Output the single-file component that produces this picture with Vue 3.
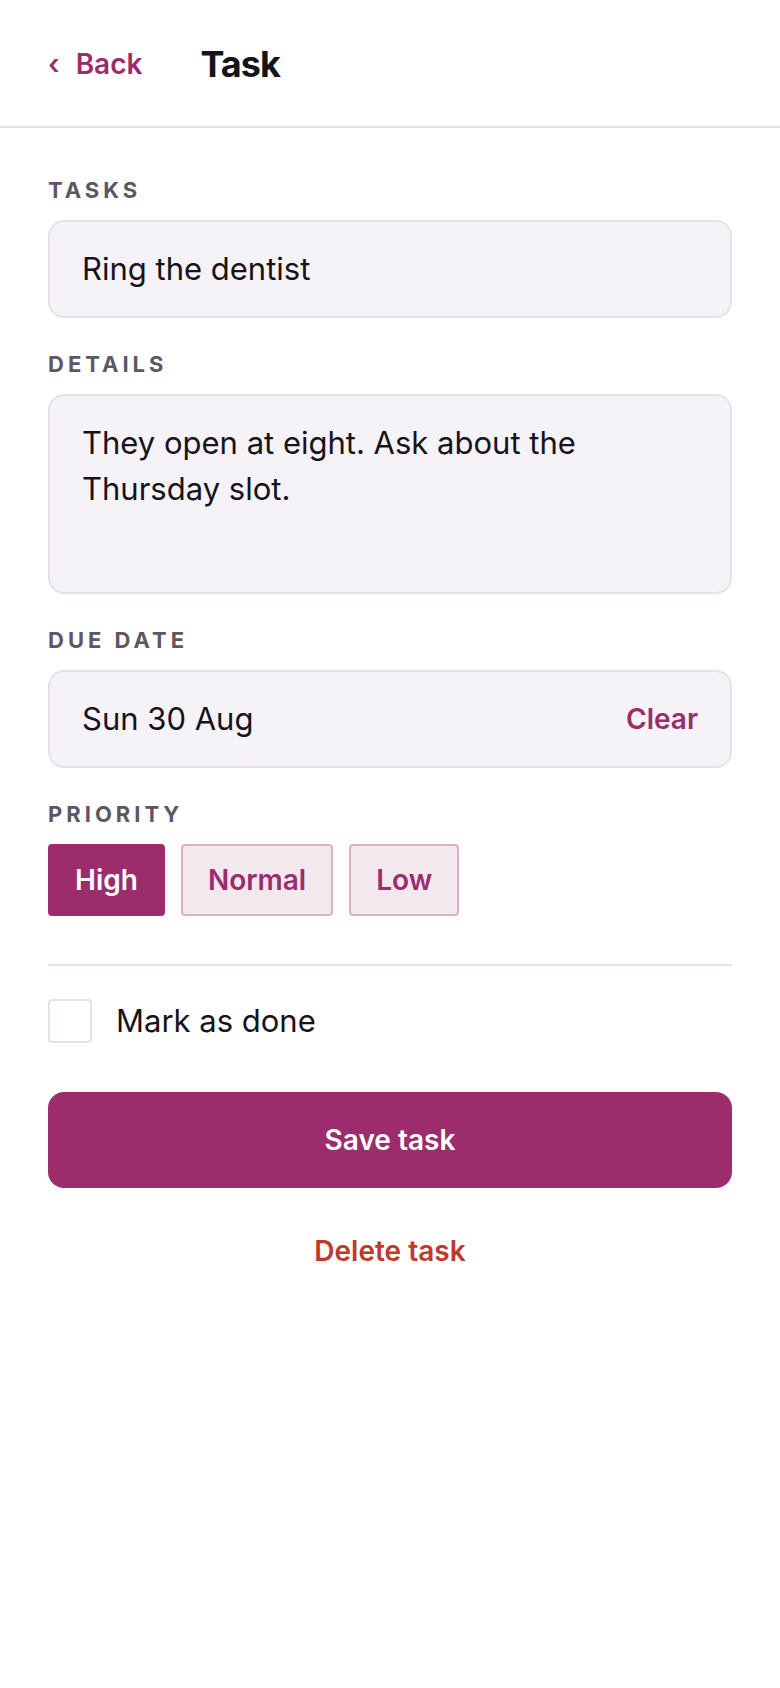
<template>
  <div class="task-page">
    <header class="topbar">
      <button type="button" class="link-btn back-btn">
        <span aria-hidden="true">‹</span>
        <span>Back</span>
      </button>
      <h1 class="title">Task</h1>
    </header>

    <form class="task-form" @submit.prevent>
      <div class="field">
        <label class="field-label" for="task-name">Tasks</label>
        <input id="task-name" v-model="task.name" class="control" type="text" />
      </div>

      <div class="field">
        <label class="field-label" for="task-details">Details</label>
        <textarea id="task-details" v-model="task.details" class="control details"></textarea>
      </div>

      <div class="field">
        <label class="field-label" for="task-due">Due date</label>
        <div class="control due">
          <input id="task-due" v-model="task.due" class="due-input" type="text" />
          <button type="button" class="link-btn" @click="task.due = ''">Clear</button>
        </div>
      </div>

      <div class="field" role="group" aria-labelledby="priority-label">
        <span id="priority-label" class="field-label">Priority</span>
        <div class="chips">
          <button
            v-for="level in priorities"
            :key="level"
            type="button"
            class="chip"
            :class="{ active: task.priority === level }"
            :aria-pressed="task.priority === level"
            @click="task.priority = level"
          >
            {{ level }}
          </button>
        </div>
      </div>

      <div class="done-row">
        <input id="task-done" v-model="task.done" class="checkbox" type="checkbox" />
        <label for="task-done">Mark as done</label>
      </div>

      <button type="submit" class="save-btn">Save task</button>
      <button type="button" class="link-btn delete-btn">Delete task</button>
    </form>
  </div>
</template>

<script setup>
import { reactive } from 'vue'

const priorities = ['High', 'Normal', 'Low']

const task = reactive({
  name: 'Ring the dentist',
  details: 'They open at eight. Ask about the Thursday slot.',
  due: 'Sun 30 Aug',
  priority: 'High',
  done: false
})
</script>

<style>
body {
  background: #fff;
}
</style>

<style scoped>
.task-page {
  min-height: 100vh;
  background: #fff;
  color: #16131a;
  font-family: Inter, "Liberation Sans", sans-serif;
  font-size: 31px;
  line-height: 46px;
}

.task-page * {
  box-sizing: border-box;
}

button,
input,
textarea {
  font: inherit;
  color: inherit;
  margin: 0;
}

button {
  cursor: pointer;
}

/* Header */
.topbar {
  display: flex;
  align-items: center;
  gap: 58px;
  padding: 41px 48px 39px;
  border-bottom: 2px solid #e8e1e8;
}

.title {
  margin: 0;
  font-size: 36px;
  font-weight: 700;
  letter-spacing: -1px;
}

.link-btn {
  padding: 0;
  border: 0;
  background: none;
  color: #9c2c6c;
  font-size: 28px;
  font-weight: 600;
}

.back-btn {
  display: flex;
  gap: 16px;
}

/* Form */
.task-form {
  display: flex;
  flex-direction: column;
  padding: 48px;
}

.field {
  display: flex;
  flex-direction: column;
  gap: 16px;
  margin-bottom: 32px;
}

.field-label {
  color: #5f5663;
  font-size: 22px;
  font-weight: 700;
  line-height: 28px;
  letter-spacing: 4px;
  text-transform: uppercase;
}

.control {
  display: block;
  width: 100%;
  padding: 24px 32px;
  border: 2px solid #e8e1e8;
  border-radius: 16px;
  background: #f5f3f7;
}

.details {
  height: 200px;
  resize: none;
}

.due {
  display: flex;
  align-items: center;
  gap: 16px;
}

.due-input {
  flex: 1;
  min-width: 0;
  height: 46px;
  padding: 0;
  border: 0;
  background: none;
}

/* Priority */
.chips {
  display: flex;
  gap: 16px;
}

.chip {
  height: 72px;
  padding: 0 25px;
  border: 2px solid #ddb0cb;
  border-radius: 4px;
  background: #f4e8ef;
  color: #9c2c6c;
  font-size: 28px;
  font-weight: 600;
}

.chip.active {
  border-color: #9c2c6c;
  background: #9c2c6c;
  color: #fff;
}

/* Footer */
.done-row {
  display: flex;
  align-items: center;
  gap: 24px;
  margin: 16px 0 48px;
  padding-top: 32px;
  border-top: 2px solid #e8e1e8;
}

.checkbox {
  appearance: none;
  width: 44px;
  height: 44px;
  border: 2px solid #e8e1e8;
  border-radius: 4px;
  background: #fff;
}

.checkbox:checked {
  border-color: #9c2c6c;
  background: #9c2c6c;
}

.save-btn {
  height: 96px;
  border: 0;
  border-radius: 16px;
  background: #9c2c6c;
  color: #fff;
  font-size: 28px;
  font-weight: 600;
}

.delete-btn {
  align-self: center;
  margin-top: 40px;
  color: #c0392b;
}
</style>
